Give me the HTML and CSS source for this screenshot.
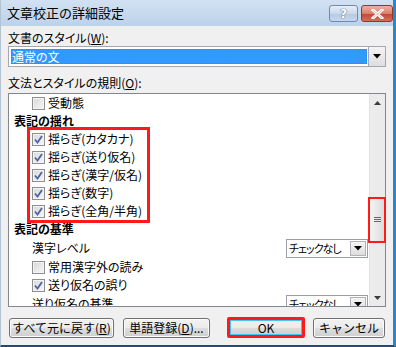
FILE: index.html
```html
<!DOCTYPE html>
<html>
<head>
    <title>文章校正の詳細設定</title>
    <link rel="stylesheet" href="styles.css">
</head>
<body>
    <div class="window">
        <div class="titlebar">
            <span class="title">文章校正の詳細設定</span>
            <div class="caption-btns">
                <div class="cap help">?</div>
                <div class="cap close">
                    <svg width="13" height="10" viewBox="0 0 13 10"><path d="M2 1 L11 9 M11 1 L2 9" stroke="#fff" stroke-width="3" stroke-linecap="square"/><path d="M2 1 L11 9 M11 1 L2 9" stroke="#7a2a1e" stroke-width="0.6" fill="none" opacity="0.5"/></svg>
                </div>
            </div>
        </div>

        <div class="content">
            <div class="field-label">文書のスタイル(<u>W</u>):</div>
            <div class="combo main-combo">
                <div class="combo-value"><span class="sel">通常の文</span></div>
                <div class="combo-arrow"><svg width="8" height="5" viewBox="0 0 8 5"><path d="M0 0 H8 L4 4.5 Z" fill="#000"/></svg></div>
            </div>

            <div class="field-label second">文法とスタイルの規則(<u>O</u>):</div>
            <div class="listbox">
                <div class="items">
                    <div class="row opt">
                        <span class="cb"></span>受動態
                    </div>
                    <div class="row heading">表記の揺れ</div>
                    <div class="mark-group">
                        <div class="row opt"><span class="cb"><svg width="11" height="11" viewBox="0 0 11 11"><path d="M2 5.5 L4.5 8.5 L9 2" stroke="#4b62a6" stroke-width="1.8" fill="none"/></svg></span>揺らぎ(カタカナ)</div>
                        <div class="row opt"><span class="cb"><svg width="11" height="11" viewBox="0 0 11 11"><path d="M2 5.5 L4.5 8.5 L9 2" stroke="#4b62a6" stroke-width="1.8" fill="none"/></svg></span>揺らぎ(送り仮名)</div>
                        <div class="row opt"><span class="cb"><svg width="11" height="11" viewBox="0 0 11 11"><path d="M2 5.5 L4.5 8.5 L9 2" stroke="#4b62a6" stroke-width="1.8" fill="none"/></svg></span>揺らぎ(漢字/仮名)</div>
                        <div class="row opt"><span class="cb"><svg width="11" height="11" viewBox="0 0 11 11"><path d="M2 5.5 L4.5 8.5 L9 2" stroke="#4b62a6" stroke-width="1.8" fill="none"/></svg></span>揺らぎ(数字)</div>
                        <div class="row opt"><span class="cb"><svg width="11" height="11" viewBox="0 0 11 11"><path d="M2 5.5 L4.5 8.5 L9 2" stroke="#4b62a6" stroke-width="1.8" fill="none"/></svg></span>揺らぎ(全角/半角)</div>
                    </div>
                    <div class="row heading">表記の基準</div>
                    <div class="row sub tall">
                        漢字レベル
                        <div class="combo small-combo">
                            <div class="combo-value">チェックなし</div>
                            <div class="combo-arrow"><svg width="8" height="5" viewBox="0 0 8 5"><path d="M0 0 H8 L4 4.5 Z" fill="#000"/></svg></div>
                        </div>
                    </div>
                    <div class="row opt"><span class="cb"></span>常用漢字外の読み</div>
                    <div class="row opt"><span class="cb"><svg width="11" height="11" viewBox="0 0 11 11"><path d="M2 5.5 L4.5 8.5 L9 2" stroke="#4b62a6" stroke-width="1.8" fill="none"/></svg></span>送り仮名の誤り</div>
                    <div class="row sub tall">
                        送り仮名の基準
                        <div class="combo small-combo">
                            <div class="combo-value">チェックなし</div>
                            <div class="combo-arrow"><svg width="8" height="5" viewBox="0 0 8 5"><path d="M0 0 H8 L4 4.5 Z" fill="#000"/></svg></div>
                        </div>
                    </div>
                </div>
                <div class="scrollbar">
                    <div class="sb-btn"><svg width="7" height="4" viewBox="0 0 7 4"><path d="M0 4 H7 L3.5 0 Z" fill="#3c3c3c"/></svg></div>
                    <div class="sb-gap"></div>
                    <div class="sb-thumb"><svg width="7" height="6" viewBox="0 0 7 6"><path d="M0 0.5 H7 M0 2.5 H7 M0 4.5 H7" stroke="#6a6a6a" stroke-width="1"/></svg></div>
                    <div class="sb-fill"></div>
                    <div class="sb-btn"><svg width="7" height="4" viewBox="0 0 7 4"><path d="M0 0 H7 L3.5 4 Z" fill="#3c3c3c"/></svg></div>
                </div>
            </div>

            <div class="buttons">
                <button class="btn reset">すべて元に戻す(<u>R</u>)</button>
                <button class="btn words">単語登録(<u>D</u>)...</button>
                <button class="btn ok">OK</button>
                <button class="btn cancel">キャンセル</button>
            </div>
        </div>
    </div>
</body>
</html>
```

FILE: styles.css
```css
* {
    box-sizing: border-box;
}

body {
    margin: 0;
    font-family: "Noto Sans CJK JP", "Noto Sans", sans-serif;
    font-size: 12px;
    font-feature-settings: "palt";
    color: #000;
}

.window {
    width: 396px;
    height: 347px;
    background-color: #f0f0f0;
    border-left: 1px solid #b4c3d4;
    border-right: 3px solid #2a88c8;
    border-bottom: 2px solid #2b4a6b;
    display: flex;
    flex-direction: column;
}

.titlebar {
    height: 26px;
    display: flex;
    align-items: center;
    padding-left: 6px;
    background: linear-gradient(#d2e1f2, #bcd2ea);
}

.title {
    font-size: 13px;
    line-height: 16px;
    font-feature-settings: normal;
}

.caption-btns {
    margin-left: auto;
    align-self: flex-start;
    margin-top: 5px;
    display: flex;
    gap: 3px;
}

.cap {
    height: 17px;
    border-radius: 3px;
    display: flex;
    align-items: center;
    justify-content: center;
}

.help {
    width: 29px;
    border: 1px solid #7389a7;
    background: linear-gradient(#e6eef8 0%, #cad9ec 50%, #b6cae4 51%, #c5d7ee 100%);
    color: #fff;
    font-family: "DejaVu Sans", sans-serif;
    font-weight: bold;
    font-size: 13px;
    text-shadow: 0 0 1px #4a5c78, 0 0 1px #4a5c78;
}

.close {
    width: 32px;
    border: 1px solid #8a3a2f;
    background: linear-gradient(#eab0a4 0%, #d9806d 50%, #c5442f 51%, #d0705c 100%);
}

.content {
    flex: 1;
    padding: 0 7px;
    display: flex;
    flex-direction: column;
}

.field-label {
    margin-top: 5px;
    line-height: 14px;
}

.field-label.second {
    margin-top: 9px;
}

.combo {
    display: flex;
    background-color: #fff;
    border: 1px solid #a3a7ae;
}

.main-combo {
    margin-top: 1px;
    height: 21px;
}

.combo-value {
    flex: 1;
    display: flex;
    align-items: center;
    padding: 0 1px;
}

.main-combo .combo-value {
    padding: 2px 1px 2px 2px;
}

.sel {
    flex: 1;
    height: 100%;
    display: flex;
    align-items: center;
    padding-left: 1px;
    background-color: #3399ff;
    color: #fff;
    outline: 1px dotted #c06a00;
    outline-offset: -1px;
    line-height: 13px;
}

.combo-arrow {
    width: 17px;
    display: flex;
    align-items: center;
    justify-content: center;
    border-left: 1px solid #a3a7ae;
    background: linear-gradient(#f4f4f4, #dedede);
}

.listbox {
    margin-top: 3px;
    height: 214px;
    display: flex;
    background-color: #fff;
    border: 1px solid #828790;
}

.items {
    flex: 1;
    overflow: hidden;
}

.row {
    height: 18px;
    display: flex;
    align-items: center;
    white-space: nowrap;
    line-height: 14px;
}

.row.tall {
    height: 20px;
}

.opt {
    padding-left: 23px;
}

.sub {
    padding-left: 23px;
}

.heading {
    padding-left: 5px;
    font-weight: bold;
}

.cb {
    width: 13px;
    height: 13px;
    margin-right: 3px;
    border: 1px solid #8f8f8f;
    background: linear-gradient(135deg, #d8d8d8, #f7f7f7);
    box-shadow: inset 0 0 0 1px #f4f4f4;
    display: flex;
    align-items: center;
    justify-content: center;
}

.mark-group {
    margin: -3px 0 -3px 18px;
    width: 123px;
    border: 3px solid #ff1a1a;
}

.mark-group .opt {
    padding-left: 2px;
}

.small-combo {
    margin-left: auto;
    margin-right: 1px;
    width: 82px;
    height: 19px;
    border-color: #9a9ea6;
}

.small-combo .combo-value {
    padding-left: 2px;
    font-size: 11px;
    letter-spacing: -1px;
    white-space: nowrap;
}

.small-combo .combo-arrow {
    width: 16px;
    margin: 1px;
    border: 1px solid #b0b3b8;
}

.scrollbar {
    width: 16px;
    display: flex;
    flex-direction: column;
    background-color: #ebebeb;
    border-left: 1px solid #e2e2e2;
}

.sb-btn {
    height: 17px;
    display: flex;
    align-items: center;
    justify-content: center;
}

.sb-gap {
    height: 86px;
}

.sb-thumb {
    height: 46px;
    margin: 0 -1px 0 -2px;
    border: 2px solid #ff1a1a;
    background: linear-gradient(90deg, #f4f4f4, #dcdcdc);
    display: flex;
    align-items: center;
    justify-content: center;
}

.sb-fill {
    flex: 1;
}

.buttons {
    margin-top: 10px;
    height: 21px;
    display: flex;
    align-items: center;
}

.btn {
    height: 20px;
    padding: 0;
    font-family: inherit;
    font-size: 12px;
    color: #000;
    border: 1px solid #707070;
    border-radius: 3px;
    background: linear-gradient(#f2f2f2 0%, #ebebeb 50%, #dddddd 51%, #cfcfcf 100%);
    box-shadow: inset 0 0 0 1px #fbfbfb;
    line-height: 14px;
}

.reset {
    width: 105px;
    margin-left: 1px;
}

.words {
    width: 87px;
    margin-left: 9px;
}

.ok {
    width: 78px;
    height: 21px;
    margin-left: 17px;
    border: 3px solid #ff1a1a;
    border-radius: 2px;
    box-shadow: inset 0 0 0 1px #3cc7f5;
}

.cancel {
    width: 72px;
    margin-left: 8px;
}
```
